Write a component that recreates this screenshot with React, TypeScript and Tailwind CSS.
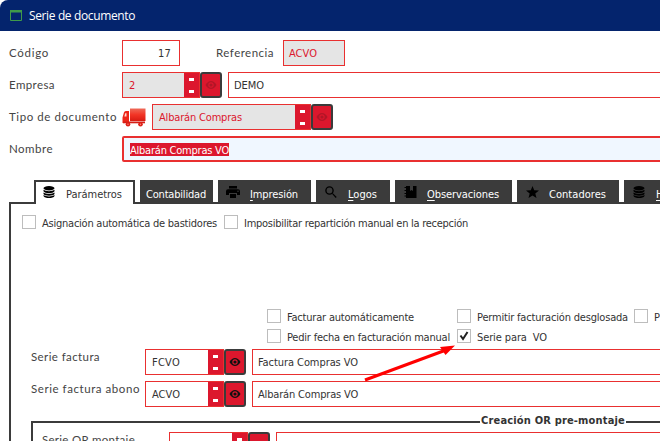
import { useLayoutEffect, useRef, useState, type ReactNode } from "react";

/** Text whose tracking is computed so that the run spans `w` pixels. */
function Fit({ w, children, className = "", u = false }: { w: number; children: string; className?: string; u?: boolean }) {
  const ref = useRef<HTMLSpanElement>(null);
  const [spacing, setSpacing] = useState(0);
  useLayoutEffect(() => {
    if (ref.current && children.length) setSpacing((w - ref.current.getBoundingClientRect().width) / children.length);
  }, [w, children]);
  return (
    <span ref={ref} className={`inline-block shrink-0 whitespace-pre ${className}`} style={{ letterSpacing: spacing }}>
      {u ? (
        <>
          <span className="underline underline-offset-2">{children[0]}</span>
          {children.slice(1)}
        </>
      ) : (
        children
      )}
    </span>
  );
}

const LABEL = "font-['Lato',sans-serif] text-[11.5px] leading-[14px] text-[#444] [font-stretch:normal]";

function Label({ w, children, className = "" }: { w: number; children: string; className?: string }) {
  return (
    <div className={`flex shrink-0 ${className}`}>
      <Fit w={w} className={LABEL}>{children}</Fit>
    </div>
  );
}

function Spinner() {
  return (
    <div className="flex h-full w-[15px] shrink-0 flex-col items-center justify-between bg-[#dc172d] pt-[5px] pb-[4px]">
      <i className="h-[3px] w-[5px] bg-white" />
      <i className="h-[3px] w-[5px] bg-white" />
    </div>
  );
}

function EyeButton({ dim = false }: { dim?: boolean }) {
  return (
    <div className="flex h-[26px] w-[22px] shrink-0 items-center justify-center rounded-[3px] border-2 border-[#3b3b3b] bg-[#dc172d]">
      <svg viewBox="0 0 12 10" className={`h-[10px] w-3 ${dim ? "opacity-20" : ""}`}>
        <path d="M.5 5C2 2.200 4 1 6 1s4 1.200 5.500 4C10 7.800 8 9 6 9S2 7.800.5 5Z" fill="#111" />
        <circle cx="6" cy="5" r="2.700" fill="#dc172d" />
        <circle cx="6" cy="5" r="1.600" fill="#111" />
      </svg>
    </div>
  );
}

function Field({ className = "", children }: { className?: string; children?: ReactNode }) {
  return <div className={`flex h-[26px] shrink-0 items-center border border-[#e93030] pt-[2px] ${className}`}>{children}</div>;
}

function Lookup({ width, value, w, readOnly = false }: { width: string; value: string; w: number; readOnly?: boolean }) {
  return (
    <>
      <div className={`flex h-[26px] shrink-0 items-center justify-between border border-[#e93030] pl-[6px] ${width} ${readOnly ? "bg-[#e5e5e5] text-[#dc172d]" : ""}`}>
        <Fit w={w} className="mt-[2px]">{value}</Fit>
        <Spinner />
      </div>
      <EyeButton dim={readOnly} />
    </>
  );
}

function Check({ label, w, checked = false }: { label: string; w: number; checked?: boolean }) {
  return (
    <div className="flex h-[14px] shrink-0 items-center">
      <div className="mr-[6px] size-[14px] shrink-0 border border-[#bdbdbd]">
        {checked && (
          <svg viewBox="0 0 12 12" className="size-3">
            <path d="M2.500 5.500 5 9 9.500 2" fill="none" stroke="#222" strokeWidth="2" />
          </svg>
        )}
      </div>
      <Fit w={w} className="mt-1">{label}</Fit>
    </div>
  );
}

function Database() {
  return (
    <svg viewBox="0 0 12 12" className="size-3">
      <ellipse cx="6" cy="2.200" rx="5.500" ry="2.200" />
      <path d="M.5 3.800c2 1.900 9 1.900 11 0v1.500c-1 2.500-10 2.500-11 0ZM.5 6.600c2 1.900 9 1.900 11 0v1.300c-1 2.300-10 2.300-11 0ZM.5 9.100c2 1.900 9 1.900 11 0v.8c-1 2.700-10 2.700-11 0Z" />
    </svg>
  );
}

function Printer() {
  return (
    <svg viewBox="0 0 14 12" className="h-3 w-[14px]">
      <path d="M3 0h8v2.500H3zM2 3.200h10a2 2 0 0 1 2 2V9h-3V7H3v2H0V5.200a2 2 0 0 1 2-2ZM4 8h6v4H4z" />
      <circle cx="12" cy="5.200" r=".6" fill="#555" />
    </svg>
  );
}

function Magnifier() {
  return (
    <svg viewBox="0 0 12 12" className="size-3">
      <circle cx="4.500" cy="4.500" r="3.600" fill="none" stroke="black" strokeWidth="1.400" />
      <path d="m7 7.700.7-.7 4 4-1 1Z" />
    </svg>
  );
}

function Notebook() {
  return (
    <svg viewBox="0 0 13 14" className="h-[14px] w-[13px]">
      <path d="M2 1h4v5l1.500-1L9 6V1h3.500v12H2v-1.500H.5v-1H2V9H.5V8H2V6H.5V5H2V3H.5V2H2Z" />
    </svg>
  );
}

function Star() {
  return (
    <svg viewBox="0 0 13 12" className="h-3 w-[13px]">
      <path d="m6.500 0 1.700 4.300 4.800.3-3.700 2.900 1.200 4.500-4-2.500-4 2.500 1.200-4.500L0 4.600l4.800-.3Z" />
    </svg>
  );
}

function Tab({ width, icon, label, w, pad, gap = "", u = false }: { width: string; icon?: ReactNode; label: string; w: number; pad: string; gap?: string; u?: boolean }) {
  return (
    <div className={`flex h-[22px] shrink-0 items-start overflow-hidden bg-[#3b3b3b] text-white ${width} ${pad}`}>
      {icon && <div className={`flex h-6 shrink-0 items-center text-black ${gap}`}>{icon}</div>}
      <Fit w={w} u={u} className="mt-[8px]">{label}</Fit>
    </div>
  );
}

function Truck() {
  return (
    <svg viewBox="0 0 24 19" className="mr-[6px] h-[19px] w-6 shrink-0">
      <defs>
        <linearGradient id="cargo" x1="0" y1="0" x2="0" y2="1">
          <stop offset="0" stopColor="#ee6a58" />
          <stop offset=".5" stopColor="#f23425" />
          <stop offset="1" stopColor="#d81b12" />
        </linearGradient>
      </defs>
      <path d="M8 .5h15.500v12.500H8z" fill="url(#cargo)" />
      <path d="M7 3H4Q2 3 1.500 6L.5 9.500v5.500H7V3Z" fill="#ed2619" />
      <path d="M3.200 5.200H4.500V8.500H2.400Z" fill="#ffd9d2" />
      <path d="M1 13.500h22v1.800H1z" fill="#d51d14" />
      <circle cx="6" cy="16.200" r="2.300" fill="#dd1e16" />
      <circle cx="18.500" cy="16.200" r="2.300" fill="#dd1e16" />
      <circle cx="6" cy="16.200" r=".7" fill="#ff8b7b" />
      <circle cx="18.500" cy="16.200" r=".7" fill="#ff8b7b" />
    </svg>
  );
}

export default function App() {
  return (
    <div className="relative h-[441px] w-[660px] overflow-hidden bg-white font-['DejaVu_Sans_Condensed','DejaVu_Sans',sans-serif] text-[11px] leading-[14px] text-[#333] [font-stretch:condensed]">
      <header className="flex h-[31px] items-center rounded-tl-[8px] bg-[#04246d] pl-[10px] text-white">
        <svg viewBox="0 0 12 11" className="mr-[7px] h-[11px] w-3">
          <path d="M.5.5h11v10H.5Z" fill="none" stroke="#3f9a4a" strokeWidth="1" />
          <path d="M0 0h12v2.500H0z" fill="#3f9a4a" />
        </svg>
        <Fit w={106} className="font-['Open_Sans',sans-serif] text-[12px] leading-4 [font-stretch:normal]">Serie de documento</Fit>
      </header>

      <section className="flex flex-col gap-[6px] pt-[9px] pl-[9px]">
        <div className="flex items-center">
          <div className="w-[113px] shrink-0"><Label w={40}>Código</Label></div>
          <Field className="w-[58px] justify-end pr-[8px]"><Fit w={13}>17</Fit></Field>
          <Label w={58} className="ml-9 w-[67px]">Referencia</Label>
          <Field className="w-[62px] bg-[#e5e5e5] pl-[5px] text-[#dc172d]"><Fit w={28}>ACVO</Fit></Field>
        </div>
        <div className="flex items-center">
          <div className="w-[113px] shrink-0"><Label w={46}>Empresa</Label></div>
          <Lookup width="w-[78px]" value="2" w={7} readOnly />
          <Field className="ml-[6px] w-[440px] pl-[5px]"><Fit w={30}>DEMO</Fit></Field>
        </div>
        <div className="flex items-center">
          <div className="w-[113px] shrink-0"><Label w={108}>Tipo de documento</Label></div>
          <Truck />
          <Lookup width="w-[159px]" value="Albarán Compras" w={83} readOnly />
        </div>
        <div className="flex items-center">
          <div className="w-[113px] shrink-0"><Label w={44}>Nombre</Label></div>
          <div className="flex h-[26px] w-[550px] shrink-0 items-center rounded-[2px] border-2 border-[#e93030] bg-[#f0f7ff] pl-[6px]">
            <Fit w={99} className="mt-px h-[13px] bg-[#dc172d] leading-[15px] text-white">Albarán Compras VO</Fit>
          </div>
        </div>
      </section>

      <nav className="mt-[18px] flex h-[22px] gap-[5px] pl-[34px]">
        <div className="z-10 flex h-6 w-[101px] shrink-0 items-start border-2 border-b-0 border-[#3b3b3b] bg-white pl-[7px]">
          <div className="mt-[4px] mr-[11px] text-black"><Database /></div>
          <Fit w={56} className="mt-[6px]">Parámetros</Fit>
        </div>
        <Tab width="w-[73px]" pad="pl-[6px]" label="Contabilidad" w={60} />
        <Tab width="w-[93px]" pad="pl-[8px]" gap="mr-[10px]" icon={<Printer />} label="Impresión" w={48} u />
        <Tab width="w-[74px]" pad="pl-[9px]" gap="mr-[11px]" icon={<Magnifier />} label="Logos" w={29} u />
        <Tab width="w-[117px]" pad="pl-[9px]" gap="mr-[10px]" icon={<Notebook />} label="Observaciones" w={72} u />
        <Tab width="w-[102px]" pad="pl-[9px]" gap="mr-[10px]" icon={<Star />} label="Contadores" w={57} />
        <Tab width="w-[90px]" pad="pl-[9px]" gap="mr-[11px]" icon={<Database />} label="Histórico" w={46} u />
      </nav>

      <main className="ml-[9px] h-[260px] w-[680px] border-t-2 border-l-2 border-[#3b3b3b]">
        <div className="flex gap-[7px] pt-[11px] pl-[11px]">
          <Check label="Asignación automática de bastidores" w={175} />
          <Check label="Imposibilitar repartición manual en la recepción" w={224} />
        </div>
        <div className="mt-20 grid grid-cols-[190px_177px_100px] gap-y-[6px] pl-64">
          <Check label="Facturar automáticamente" w={127} />
          <Check label="Permitir facturación desglosada" w={151} />
          <Check label="Proforma" w={46} />
          <Check label="Pedir fecha en facturación manual" w={163} />
          <Check label="Serie para  VO" w={70} checked />
        </div>
        <div className="mt-[6px] flex flex-col gap-[6px] pl-5">
          <div className="flex">
            <div className="w-[114px] shrink-0 pt-px"><Label w={69}>Serie factura</Label></div>
            <Lookup width="w-[79px]" value="FCVO" w={28} />
            <Field className="ml-[6px] w-[420px] pl-[5px]"><Fit w={100}>Factura Compras VO</Fit></Field>
          </div>
          <div className="flex">
            <div className="w-[114px] shrink-0 pt-px"><Label w={109}>Serie factura abono</Label></div>
            <Lookup width="w-[79px]" value="ACVO" w={28} />
            <Field className="ml-[6px] w-[420px] pl-[5px]"><Fit w={100}>Albarán Compras VO</Fit></Field>
          </div>
        </div>
        <div className="mt-[6px] ml-5 w-[640px]">
          <div className="flex h-[16px] items-center">
            <div className="mt-[2px] h-[2px] w-[449px] bg-[#3b3b3b]" />
            <Fit w={144} className="ml-px font-bold">Creación OR pre-montaje</Fit>
            <div className="mt-[2px] ml-px h-[2px] grow bg-[#3b3b3b]" />
          </div>
          <div className="-mt-[6px] flex h-[60px] border-l-2 border-[#3b3b3b] pt-[9px] pl-[9px]">
            <div className="w-[127px] shrink-0 pt-px"><Label w={93}>Serie OR montaje</Label></div>
            <Lookup width="w-[79px]" value="" w={0} />
            <Field className="ml-[6px] w-[420px]" />
          </div>
        </div>
      </main>

      <svg viewBox="0 0 100 40" className="pointer-events-none absolute top-[343px] left-[360px] h-10 w-[100px]">
        <path d="M5 37 86 7" stroke="#f00" strokeWidth="3" />
        <path d="M95 2.500 80 4l5.500 8Z" fill="#f00" />
      </svg>
    </div>
  );
}
